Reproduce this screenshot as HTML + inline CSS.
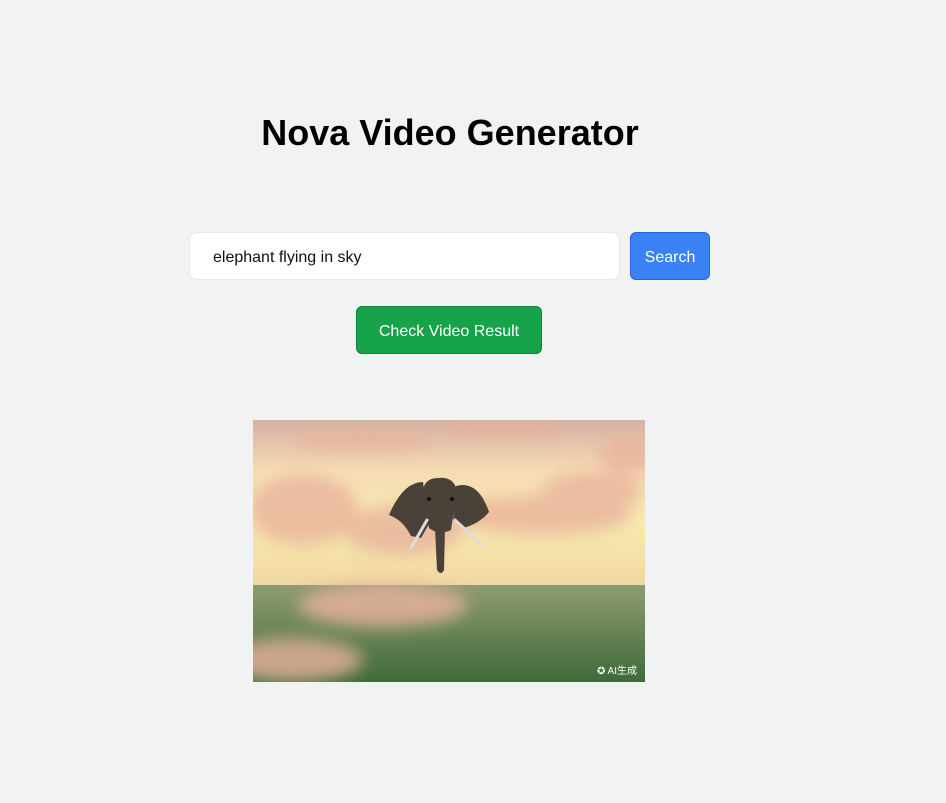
<!DOCTYPE html>
<html><head><meta charset="utf-8"><style>
html,body{margin:0;padding:0;}
body{width:946px;height:803px;background:#f1f3f3;font-family:"Liberation Sans","Noto Sans CJK SC",sans-serif;position:relative;overflow:hidden;}
h1{position:absolute;left:0;width:900px;top:111px;margin:0;text-align:center;font-size:36px;font-weight:bold;color:#000;line-height:44px;}
.inp{position:absolute;left:189px;top:232px;width:431px;height:48px;background:#fff;border:1px solid #e6e8ea;border-radius:8px;box-sizing:border-box;font-size:16px;line-height:50px;padding-left:23px;color:#111;}
.search{position:absolute;left:630px;top:232px;width:80px;height:48px;background:#3b82f6;border:1px solid #2563eb;border-radius:6px;box-sizing:border-box;color:#fff;font-size:16px;line-height:50px;text-align:center;}
.check{position:absolute;left:356px;top:306px;width:186px;height:48px;background:#16a34a;border:1px solid #15803d;border-radius:6px;box-sizing:border-box;color:#fff;font-size:16px;line-height:50px;text-align:center;}
.vid{position:absolute;left:253px;top:420px;width:392px;height:262px;overflow:hidden;}
.wm{position:absolute;right:8px;bottom:5px;color:#fff;font-size:10px;}
</style></head><body>
<h1>Nova Video Generator</h1>
<div class="inp">elephant flying in sky</div>
<div class="search">Search</div>
<div class="check">Check Video Result</div>
<div class="vid">
<svg width="392" height="262" viewBox="0 0 392 262">
<defs>
<linearGradient id="sky" x1="0" y1="0" x2="0" y2="1">
<stop offset="0" stop-color="#d6b0a4"/><stop offset="0.3" stop-color="#f5dcb4"/><stop offset="0.6" stop-color="#f8ebb0"/><stop offset="1" stop-color="#efd6a0"/></linearGradient>
<linearGradient id="gr" x1="0" y1="0" x2="0" y2="1"><stop offset="0" stop-color="#8f9c70"/><stop offset="1" stop-color="#3f6a3a"/></linearGradient>
<filter id="b"><feGaussianBlur stdDeviation="8"/></filter>
</defs>
<rect width="392" height="170" fill="url(#sky)"/>
<rect y="165" width="392" height="97" fill="url(#gr)"/>
<g filter="url(#b)" fill="#e8b29c" opacity="0.8">
<ellipse cx="50" cy="90" rx="55" ry="35"/><ellipse cx="110" cy="20" rx="70" ry="10"/>
<ellipse cx="290" cy="95" rx="90" ry="20"/><ellipse cx="375" cy="35" rx="30" ry="18"/>
<ellipse cx="340" cy="70" rx="50" ry="18"/><ellipse cx="250" cy="10" rx="60" ry="8"/>
<ellipse cx="130" cy="185" rx="85" ry="22"/><ellipse cx="40" cy="240" rx="70" ry="22"/>
<ellipse cx="150" cy="110" rx="60" ry="25"/></g>
<g fill="#4a4239">
<path d="M185 58 Q200 56 204 70 L198 110 Q186 116 176 108 L170 70 Q172 58 185 58Z"/>
<path d="M170 62 Q150 62 136 95 Q150 100 158 116 L168 118 L176 104Z"/>
<path d="M203 66 Q225 60 236 92 Q226 104 210 108 L200 100Z"/>
<path d="M182 108 L192 108 L191 150 Q188 156 184 150Z"/></g>
<circle cx="176" cy="79" r="2" fill="#111"/><circle cx="199" cy="79" r="2" fill="#111"/>
<path d="M174 100 L158 128" stroke="#ddd" stroke-width="3" stroke-linecap="round"/><path d="M202 100 L229 125" stroke="#ddd" stroke-width="3" stroke-linecap="round"/>
</svg>
<div class="wm">✪ AI生成</div>
</div>
</body></html>
